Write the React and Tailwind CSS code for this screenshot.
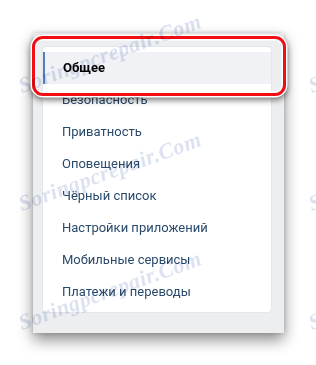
const items = [
  "Общее",
  "Безопасность",
  "Приватность",
  "Оповещения",
  "Чёрный список",
  "Настройки приложений",
  "Мобильные сервисы",
  "Платежи и переводы",
];

const marks = [
  { left: 23, top: 97 },
  { left: 23, top: 215 },
  { left: 23, top: 334 },
];

function Watermark({ left, top }) {
  return (
    <div
      className="absolute pointer-events-none select-none whitespace-nowrap origin-bottom-left -rotate-[20deg] text-[22px] leading-none italic font-bold tracking-[0.5px] text-[#d3dbec] mix-blend-multiply opacity-80 [font-family:'Liberation_Serif',serif]"
      style={{ left, top: top - 22 }}
    >
      Soringpcrepair.Com
    </div>
  );
}

export default function App() {
  return (
    <div className="relative w-[316px] h-[365px] overflow-hidden bg-white [font-family:Roboto,'Open_Sans',sans-serif]">
      <div className="ml-[33px] pt-[33px]">
        <div className="w-[251px] h-[300px] bg-[#edeef0] pl-[9px] pt-[13px] shadow-[0_7px_14px_rgba(0,0,0,0.45),0_0_4px_rgba(0,0,0,0.15)]">
          <div className="w-[230px] bg-white rounded-[4px] border border-[#e3e6ea] pt-[5px] pb-[4px]">
            {items.map((t, i) =>
              i === 0 ? (
                <div
                  key={t}
                  className="h-[32px] flex items-center bg-[#f0f2f5] border-l-2 border-[#5181b8] pl-[18px] text-[13px] font-bold text-black"
                >
                  {t}
                </div>
              ) : (
                <div
                  key={t}
                  className="h-[32px] flex items-center pl-[19px] text-[13px] text-[#2a4a6b]"
                >
                  {t}
                </div>
              )
            )}
          </div>
        </div>
      </div>

      {/* red highlight frame */}
      <div className="absolute left-[32px] top-[36px] w-[254px] h-[60px] rounded-[11px] border-[3px] border-[#f20d14] shadow-[0_0_0_1.5px_#fff,0_3px_6px_1px_rgba(0,0,0,0.55),inset_0_0_0_1.5px_#fff]" />

      {marks.map((m) => (
        <Watermark key={m.top} {...m} />
      ))}
      {marks.map((m) => (
        <Watermark key={"r" + m.top} left={313} top={m.top} />
      ))}
    </div>
  );
}
